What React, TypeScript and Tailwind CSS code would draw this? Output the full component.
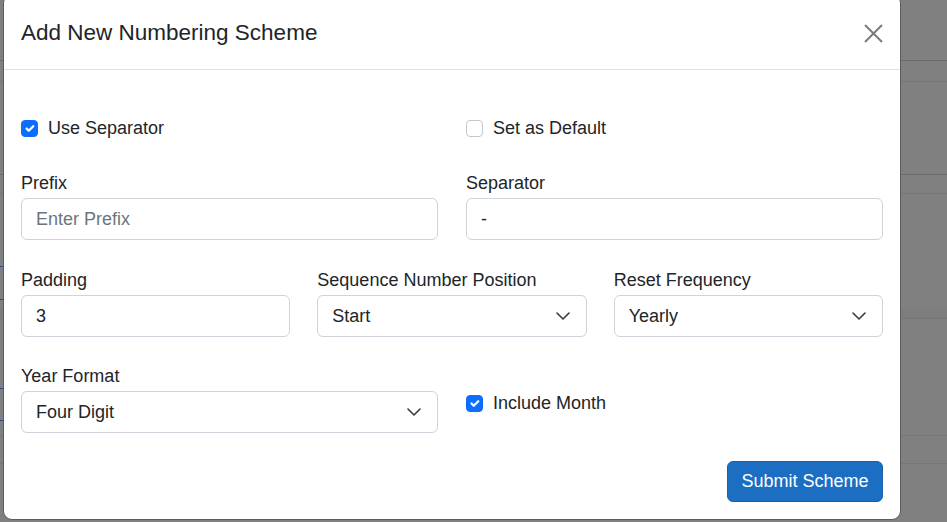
import { useState } from "react";

const Check = ({ checked }: { checked: boolean }) => (
  <span
    className={
      checked
        ? "flex h-[17px] w-[17px] shrink-0 items-center justify-center rounded-[4px] border border-[#0d6efd] bg-[#0d6efd]"
        : "flex h-[17px] w-[17px] shrink-0 items-center justify-center rounded-[4px] border border-[#c3c8cd] bg-white"
    }
  >
    {checked && (
      <svg width="15" height="15" viewBox="0 0 20 20" fill="none">
        <path d="m6 10 3 3 6-6" stroke="#fff" strokeWidth="3" strokeLinecap="round" strokeLinejoin="round" />
      </svg>
    )}
  </span>
);

const CheckField = ({ label, checked }: { label: string; checked: boolean }) => (
  <label className="flex items-center gap-[10px] leading-[27px]">
    <Check checked={checked} />
    <span>{label}</span>
  </label>
);

const Label = ({ children }: { children: string }) => (
  <div className="mb-px leading-[27px]">{children}</div>
);

const TextField = ({ label, value, placeholder }: { label: string; value?: string; placeholder?: string }) => (
  <div>
    <Label>{label}</Label>
    <input
      readOnly
      value={value ?? ""}
      placeholder={placeholder}
      className="h-[42px] w-full rounded-[6px] border border-[#ced4da] bg-white px-[14px] text-[18px] text-[#212529] outline-none placeholder:text-[#6c757d]"
    />
  </div>
);

const SelectField = ({ label, value }: { label: string; value: string }) => (
  <div>
    <Label>{label}</Label>
    <div className="flex h-[42px] w-full items-center justify-between rounded-[6px] border border-[#ced4da] bg-white pl-[14px] pr-[15px]">
      <span>{value}</span>
      <svg width="16" height="16" viewBox="0 0 16 16" fill="none">
        <path d="M2 5l6 6 6-6" stroke="#343a40" strokeWidth="1.6" strokeLinecap="round" strokeLinejoin="round" />
      </svg>
    </div>
  </div>
);

export default function App() {
  const [open] = useState(true);

  return (
    <div className="relative h-[522px] w-[947px] overflow-hidden bg-[#808080] font-['Liberation_Sans',Arial,sans-serif] text-[18px] text-[#212529]">
      {/* page under the backdrop */}
      <div className="flex flex-col">
        <div className="h-[61px] border-b border-[#6b6b6b]" />
        <div className="h-[21px] border-b border-[#767676]" />
        <div className="h-[93px] border-b border-[#6b6b6b]" />
        <div className="h-[19px] border-b border-[#767676]" />
        <div className="flex h-[115px] flex-col">
          <div className="h-[72px]" />
          <div className="h-px w-[3px] bg-[#2a4f8a]" />
          <div className="h-[32px]" />
          <div className="h-px w-[3px] bg-[#2a4f8a]" />
        </div>
        <div className="h-[10px] border-b border-[#767676] bg-[#7d7d7d]" />
        <div className="flex h-[117px] flex-col border-b border-[#767676]">
          <div className="h-[69px]" />
          <div className="h-px w-[3px] bg-[#2a4f8a]" />
          <div className="h-[31px]" />
          <div className="h-px w-[3px] bg-[#2a4f8a]" />
        </div>
        <div className="h-[28px] border-b border-[#767676]" />
      </div>

      {open && (
        <div className="absolute left-[3px] top-[-6px] w-[898px] rounded-[9px] border border-[#5c5c5c] bg-white">
          <div className="flex items-center justify-between border-b border-[#dee2e6] px-[17px] pb-[19px] pt-[21px]">
            <h5 className="text-[22.5px] leading-[34px]">Add New Numbering Scheme</h5>
            <button className="flex h-[20px] w-[20px] items-center justify-center">
              <svg width="19" height="19" viewBox="0 0 19 19" fill="none">
                <path d="M1 1l17 17M18 1L1 18" stroke="#7b7b7b" strokeWidth="2" />
              </svg>
            </button>
          </div>

          <div className="px-[17px] pb-[17px] pt-[45px]">
            <div className="grid grid-cols-2 gap-x-[28px]">
              <CheckField label="Use Separator" checked />
              <CheckField label="Set as Default" checked={false} />
            </div>

            <div className="mt-[28px] grid grid-cols-2 gap-x-[28px]">
              <TextField label="Prefix" placeholder="Enter Prefix" />
              <TextField label="Separator" value="-" />
            </div>

            <div className="mt-[27px] grid grid-cols-3 gap-x-[27px]">
              <TextField label="Padding" value="3" />
              <SelectField label="Sequence Number Position" value="Start" />
              <SelectField label="Reset Frequency" value="Yearly" />
            </div>

            <div className="mt-[26px] grid grid-cols-2 gap-x-[28px]">
              <SelectField label="Year Format" value="Four Digit" />
              <div className="pt-[27px]">
                <CheckField label="Include Month" checked />
              </div>
            </div>

            <div className="mt-[28px] flex justify-end">
              <button className="flex h-[41px] w-[156px] items-center justify-center rounded-[6px] border border-[#1861ac] bg-[#1b6ec2] text-[18px] text-white">
                Submit Scheme
              </button>
            </div>
          </div>
        </div>
      )}
    </div>
  );
}
